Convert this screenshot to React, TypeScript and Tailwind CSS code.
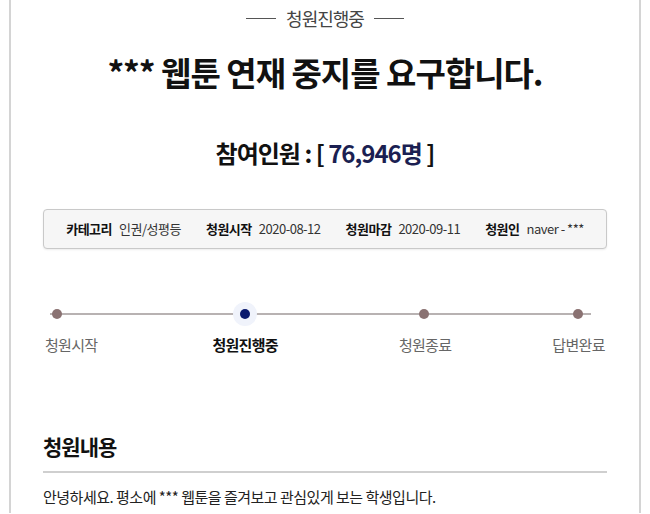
import React from 'react';

const font = { fontFamily: '"Noto Sans CJK KR", "Noto Sans", sans-serif' };

const info = [
  { label: '카테고리', value: '인권/성평등' },
  { label: '청원시작', value: '2020-08-12' },
  { label: '청원마감', value: '2020-09-11' },
  { label: '청원인', value: 'naver - ***' },
];

function Dot({ active }: { active: boolean }) {
  if (active) {
    return (
      <span className="flex h-[24px] w-[24px] items-center justify-center rounded-full bg-[#f0f3fb]">
        <span className="block h-[10px] w-[10px] rounded-full bg-[#0b1a6e]" />
      </span>
    );
  }
  return <span className="block h-[10px] w-[10px] rounded-full bg-[#8a7272]" />;
}

export default function App() {
  return (
    <div className="h-[514px] w-[650px] overflow-hidden bg-white text-[#222]" style={font}>
      <div className="mx-[9px] h-[513px] border-x-2 border-[#d4d4d4] px-[32px]">
        <div className="flex items-center justify-center gap-[10px] pt-[5px] text-[18px] leading-[26px] text-[#444]">
          <span className="h-px w-[30px] bg-[#555]" />
          <span className="tracking-[-1px]">청원진행중</span>
          <span className="h-px w-[30px] bg-[#555]" />
        </div>

        <h1 className="mt-[19px] text-center text-[33px] font-bold leading-[44px] tracking-[-1px] text-[#111]">
          *** 웹툰 연재 중지를 요구합니다.
        </h1>

        <div className="mt-[44px] text-center text-[24px] font-bold leading-[30px] tracking-[-1px] text-[#111]">
          참여인원 : [ <span className="text-[#1b1f52]">76,946명</span> ]
        </div>

        <div className="mt-[41px] flex h-[40px] items-center justify-center gap-[25px] rounded-[4px] border border-[#c9c9c9] bg-[#f6f6f6] text-[13px] tracking-[-0.5px] shadow-[0_1px_2px_rgba(0,0,0,0.08)]">
          {info.map((i) => (
            <div key={i.label} className="flex items-center gap-[7px]">
              <span className="font-bold text-[#111]">{i.label}</span>
              <span className="text-[#333]">{i.value}</span>
            </div>
          ))}
        </div>

        <div className="relative mt-[53px] flex h-[24px] items-center">
          <span className="absolute left-[7px] right-[16px] top-[11px] h-[2px] bg-[#b8b2b2]" />
          <div className="relative flex items-center">
            <span className="ml-[9px]"><Dot active={false} /></span>
            <span className="ml-[171px]"><Dot active /></span>
            <span className="ml-[162px]"><Dot active={false} /></span>
            <span className="ml-[144px]"><Dot active={false} /></span>
          </div>
        </div>

        <div className="mt-[7px] flex text-[15px] leading-[24px] tracking-[-0.7px] text-[#666]">
          <span className="ml-[2px]">청원시작</span>
          <span className="ml-[115px] font-bold text-[#111]">청원진행중</span>
          <span className="ml-[121px]">청원종료</span>
          <span className="ml-[101px]">답변완료</span>
        </div>

        <h2 className="mt-[74px] text-[21px] font-bold leading-[30px] tracking-[-1px] text-[#111]">청원내용</h2>
        <div className="mt-[10px] h-[2px] bg-[#cfcfcf]" />
        <p className="mt-[12px] text-[15px] leading-[24px] tracking-[-0.5px] text-[#222]">
          안녕하세요. 평소에 *** 웹툰을 즐겨보고 관심있게 보는 학생입니다.
        </p>
      </div>
    </div>
  );
}
